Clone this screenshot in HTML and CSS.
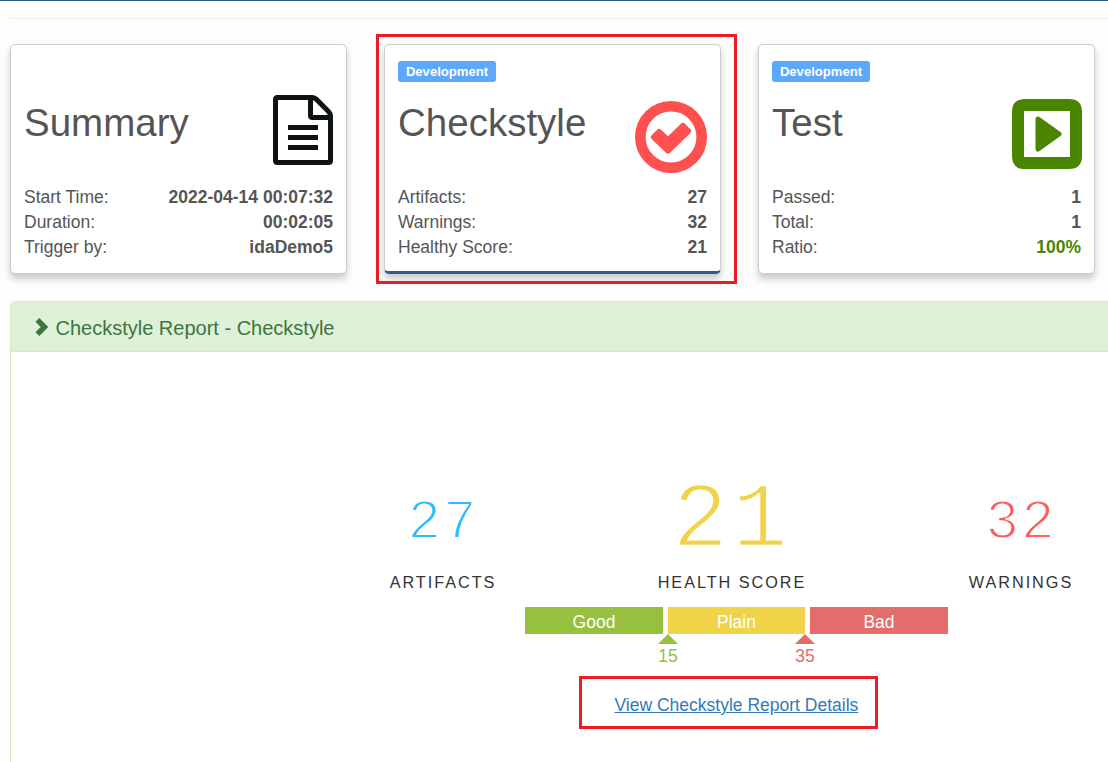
FILE: index.html
```html
<!DOCTYPE html>
<html lang="en">
<head>
<meta charset="utf-8">
<title>Checkstyle Report</title>
<link rel="stylesheet" href="styles.css">
</head>
<body>
<main class="page">
  <hr class="divider">
  <section class="cards">
    <article class="card">
      <div class="card-tag"></div>
      <div class="card-head">
        <h2 class="card-title">Summary</h2>
        <svg class="icon icon-file" width="60" height="70" viewBox="0 0 60 70" fill="none" stroke="#0d1214" stroke-width="5">
          <path d="M4.500 2.500H39Q41 2.500 43 4L55.500 16.500Q57.500 18.500 57.500 21.500V65.500Q57.500 67.500 55.500 67.500H4.500Q2.500 67.500 2.500 65.500V4.500Q2.500 2.500 4.500 2.500ZM37.500 3V20.500Q37.500 22.500 39.500 22.500H57M15 32.500H45M15 42.500H45M15 52.500H45"/>
        </svg>
      </div>
      <dl class="facts">
        <dt>Start Time:</dt><dd>2022-04-14 00:07:32</dd>
        <dt>Duration:</dt><dd>00:02:05</dd>
        <dt>Trigger by:</dt><dd>idaDemo5</dd>
      </dl>
    </article>
    <article class="card card-active">
      <div class="card-tag"><span class="badge">Development</span></div>
      <div class="card-head">
        <h2 class="card-title">Checkstyle</h2>
        <svg class="icon icon-check" width="72" height="72" viewBox="0 0 72 72">
          <circle cx="36" cy="36" r="30.700" fill="none" stroke="#ff5050" stroke-width="10.600"/>
          <path d="M19 36L24 31L33 39.500L48 25L53 30L33 49.500Z" fill="#ff5050" stroke="#ff5050" stroke-width="6" stroke-linejoin="round"/>
        </svg>
      </div>
      <dl class="facts">
        <dt>Artifacts:</dt><dd>27</dd>
        <dt>Warnings:</dt><dd>32</dd>
        <dt>Healthy Score:</dt><dd>21</dd>
      </dl>
      <div class="highlight"></div>
    </article>
    <article class="card">
      <div class="card-tag"><span class="badge">Development</span></div>
      <div class="card-head">
        <h2 class="card-title">Test</h2>
        <svg class="icon icon-play" width="70" height="70" viewBox="0 0 70 70">
          <path fill="#4a8500" fill-rule="evenodd" d="M13 0H57Q70 0 70 13V57Q70 70 57 70H13Q0 70 0 57V13Q0 0 13 0ZM12 12V58H58V12Z"/>
          <path d="M26 20L47 35L26 50Z" fill="#4a8500" stroke="#4a8500" stroke-width="5" stroke-linejoin="round"/>
        </svg>
      </div>
      <dl class="facts">
        <dt>Passed:</dt><dd>1</dd>
        <dt>Total:</dt><dd>1</dd>
        <dt>Ratio:</dt><dd class="good-text">100%</dd>
      </dl>
    </article>
  </section>
  <section class="panel">
    <header class="panel-head">
      <svg class="chevron" width="14" height="18" viewBox="0 0 14 18"><path d="M4.300 0L13.300 9L4.300 18L0.500 14.200L5.700 9L0.500 3.800Z" fill="#3c763d"/></svg>
      <h3 class="panel-title">Checkstyle Report - Checkstyle</h3>
    </header>
    <div class="metrics">
      <div class="metric artifacts"><div class="number">27</div><div class="label">ARTIFACTS</div></div>
      <div class="metric score"><div class="number">21</div><div class="label">HEALTH SCORE</div></div>
      <div class="metric warnings"><div class="number">32</div><div class="label">WARNINGS</div></div>
    </div>
    <div class="scale">
      <div class="band good">Good</div>
      <div class="band plain">Plain</div>
      <div class="band bad">Bad</div>
      <div class="mark mark-good">15</div>
      <div class="mark mark-bad">35</div>
    </div>
    <div class="details"><a href="#">View Checkstyle Report Details</a></div>
  </section>
</main>
</body>
</html>
```
FILE: styles.css
```css
* { box-sizing: border-box; }
body {
  margin: 0;
  height: 762px;
  background: #fdfdfd;
  color: #555;
  font: 17.5px/25px "Liberation Sans", Arial, sans-serif;
  border-top: 1px solid #2b5a83;
}
.page { padding: 17px 0 0 10px; }
.divider { height: 1px; margin: 0 0 25px; border: 0; background: #eee; }
.cards { display: grid; grid-template-columns: repeat(3, 337px); gap: 37px; }
.card {
  position: relative;
  height: 230px;
  padding: 13px;
  background: #fff;
  border: 1px solid #ccc;
  border-radius: 5px;
  box-shadow: 0 5px 7px rgba(0, 0, 0, .2);
}
.card-active { border-bottom: 3px solid #315c83; }
.card-tag { height: 27px; padding-top: 3px; }
.badge {
  display: block;
  width: 98px;
  height: 21px;
  border-radius: 3px;
  background: #5aa9fa;
  color: #fff;
  font-size: 13.100px;
  font-weight: bold;
  line-height: 21px;
  text-align: center;
}
.card-head { display: flex; justify-content: space-between; align-items: flex-start; height: 100px; }
.card-title { margin: 15px 0 0; font-size: 38.500px; line-height: 46px; font-weight: 400; }
.icon { display: block; flex: none; }
.icon-file { margin-top: 10px; }
.icon-check { margin-top: 16px; }
.icon-play { margin: 14px -1px 0 0; }
.facts { display: grid; grid-template-columns: auto auto; justify-content: space-between; margin: 0; }
.facts dd { margin: 0; text-align: right; font-weight: bold; }
.facts .good-text { color: #4a8500; }
.highlight { position: absolute; left: -9px; top: -11px; width: 361px; height: 250px; border: 3px solid #ed1c24; }
.panel {
  margin-top: 27px;
  height: 461px;
  background: #fff;
  border: 1px solid #d6e9c6;
  border-width: 1px 0 0 1px;
  border-radius: 5px 0 0 0;
}
.panel-head {
  display: flex;
  align-items: center;
  height: 50px;
  padding: 2px 0 0 24px;
  gap: 6.5px;
  background: #dff0d8;
  border-bottom: 1px solid #d6e9c6;
  border-radius: 4px 0 0 0;
  color: #3c763d;
}
.chevron { margin-top: -2px; }
.panel-title { margin: 0; font-size: 20px; font-weight: 400; line-height: 24px; }
.metrics { display: grid; grid-template-columns: 292px 286px 232px; padding: 112px 0 0 286px; height: 255px; }
.metric { text-align: center; }
.number {
  display: flex;
  align-items: flex-end;
  justify-content: center;
  height: 106px;
  padding-bottom: 11px;
  font-family: "Liberation Mono", "Courier New", monospace;
  font-size: 56px;
  line-height: 72px;
  letter-spacing: 2px;
  -webkit-text-stroke: 1.800px #fff;
}
.label { color: #333; font-size: 16.250px; line-height: 24px; letter-spacing: 1.950px; }
.artifacts .number { color: #30baff; }
.score .number {
  padding-bottom: 0;
  color: #f0d348;
  font-size: 93px;
  line-height: 96px;
  letter-spacing: 4px;
  -webkit-text-stroke-width: 2.400px;
}
.warnings { padding-left: 60px; }
.warnings .number { color: #ff5b5b; }
.scale {
  display: grid;
  position: relative;
  width: 423px;
  height: 62px;
  grid-template-columns: 138px 137px 138px;
  column-gap: 5px;
  margin-left: 514px;
}
.band { height: 27px; padding-top: 3px; color: #fff; line-height: 24px; text-align: center; }
.good { background: #96c03d; }
.plain { background: #f0d348; }
.bad { background: #e46d6b; }
.mark { position: absolute; top: 37px; width: 40px; text-align: center; line-height: 24px; }
.mark::before {
  content: "";
  position: absolute;
  top: -10px;
  left: 10px;
  border: 10px solid transparent;
  border-top: 0;
  border-bottom-color: currentColor;
}
.mark-good { left: 123px; color: #96c03d; }
.mark-bad { left: 260px; color: #e46d6b; }
.details {
  width: 299px;
  height: 53px;
  margin: 7px 0 0 568px;
  padding: 14px 0 0 32.500px;
  border: 3px solid #ed1c24;
  white-space: nowrap;
}
.details a { color: #337ab7; text-decoration: underline; }
```
